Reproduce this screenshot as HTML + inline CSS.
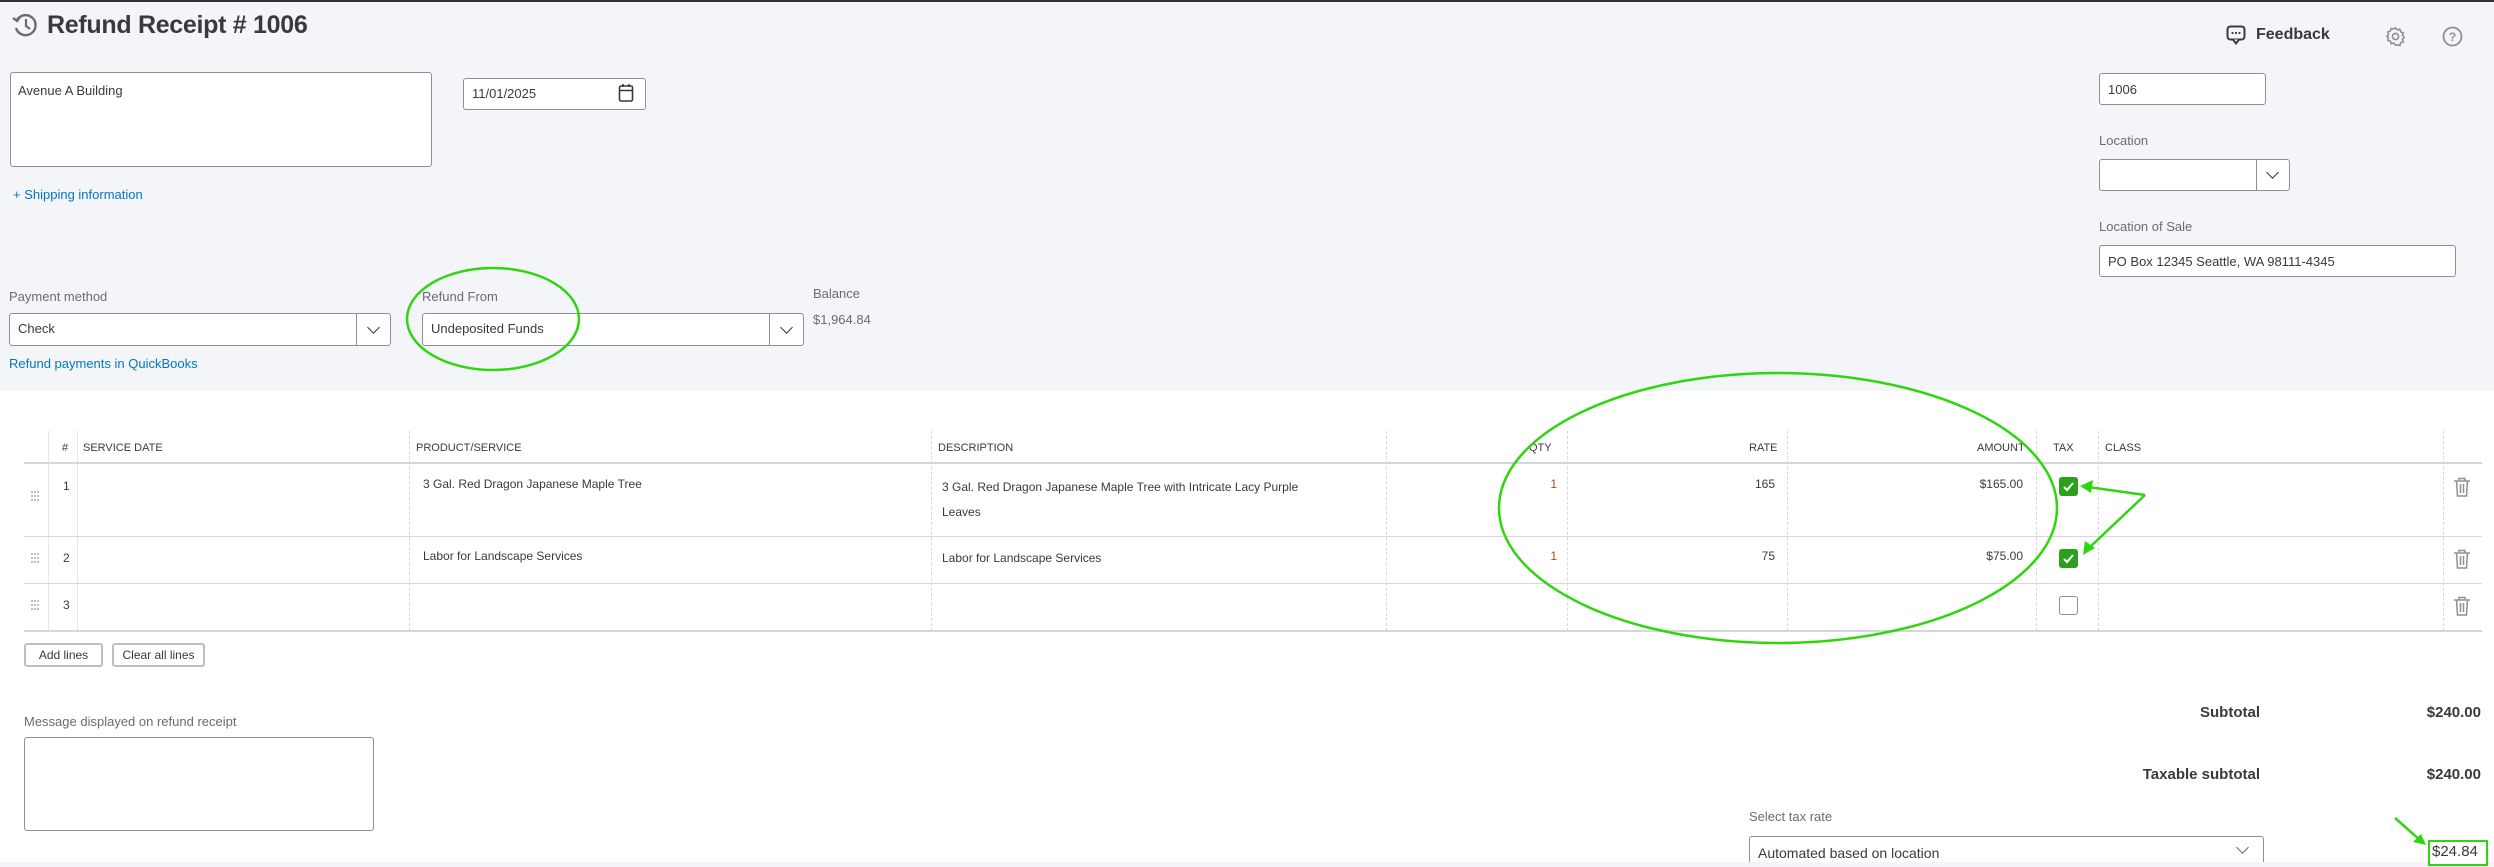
<!DOCTYPE html>
<html><head><meta charset="utf-8"><style>
*{box-sizing:border-box;margin:0;padding:0}
body{width:2494px;height:867px;overflow:hidden;background:#fff;font-family:"Liberation Sans",Arial,sans-serif;color:#393a3d;position:relative}
.a{position:absolute;white-space:nowrap}
.top{position:absolute;left:0;top:0;width:2494px;height:391px;background:#f4f5f8;border-top:2px solid #333}
.box{position:absolute;background:#fff;border:1px solid #8d9096;border-radius:3px}
.lbl{font-size:13px;color:#6b6c72}
.t13{font-size:13px;color:#393a3d}
.link{font-size:13px;color:#0077c5}
.div{position:absolute;top:0;bottom:0;border-left:1px solid #8d9096}
.chev{position:absolute;width:9px;height:9px;border-right:1.6px solid #393a3d;border-bottom:1.6px solid #393a3d;transform:rotate(45deg)}
.hd{font-size:11px;color:#393a3d;top:442px}
.vl{position:absolute;border-left:1px dashed #d4d7dc}
.hl{position:absolute;left:24px;width:2458px;border-top:2px solid #d4d7dc}
.cb{position:absolute;width:19px;height:19px;border-radius:3px;background:#2ca01c}
.btn{position:absolute;border:2px solid #babec5;border-radius:3px;font-size:12px;color:#393a3d;text-align:center;line-height:20px;background:#fff}
</style></head><body>
<div class="top"></div>
<svg class="a" style="left:11px;top:11px" width="28" height="28" viewBox="0 0 28 28"><path d="M6 9A10 10 0 1 1 5 17" fill="none" stroke="#6b6c72" stroke-width="2.4"/><path d="M2 7l4 3 3-4" fill="none" stroke="#6b6c72" stroke-width="2.4"/><path d="M15 8v7l4 3" fill="none" stroke="#6b6c72" stroke-width="2.2"/></svg>
<div class="a" style="left:47px;top:11px;font-size:25px;font-weight:bold;color:#393a3d;letter-spacing:-0.3px">Refund Receipt # 1006</div>

<svg class="a" style="left:2226px;top:25px" width="20" height="21" viewBox="0 0 20 21"><rect x="1.5" y="1.5" width="17" height="13" rx="3" fill="none" stroke="#393a3d" stroke-width="2"/><path d="M7 14.5l3 4 3-4" fill="#fff" stroke="#393a3d" stroke-width="2"/><circle cx="6.5" cy="8" r="1.1" fill="#393a3d"/><circle cx="10" cy="8" r="1.1" fill="#393a3d"/><circle cx="13.5" cy="8" r="1.1" fill="#393a3d"/></svg>
<div class="a" style="left:2256px;top:26px;font-size:16px;font-weight:bold;color:#393a3d">Feedback</div>
<svg class="a" style="left:2385px;top:26px" width="21" height="21" viewBox="0 0 24 24"><path d="M12 2l2 2.5 3-.8.8 3 3 1-.8 3 2 2.3-2 2.3.8 3-3 1-.8 3-3-.8L12 22l-2-2.5-3 .8-.8-3-3-1 .8-3L2 12l2-2.3-.8-3 3-1 .8-3 3 .8z" fill="none" stroke="#8d9096" stroke-width="1.8"/><circle cx="12" cy="12" r="3.5" fill="none" stroke="#8d9096" stroke-width="1.8"/></svg>
<svg class="a" style="left:2442px;top:26px" width="21" height="21" viewBox="0 0 21 21"><circle cx="10.5" cy="10.5" r="9" fill="none" stroke="#8d9096" stroke-width="1.8"/><text x="10.5" y="15" font-size="12" font-weight="bold" text-anchor="middle" fill="#8d9096" font-family="Liberation Sans">?</text></svg>

<div class="box" style="left:10px;top:72px;width:422px;height:95px"></div>
<div class="a t13" style="left:18px;top:83px">Avenue A Building</div>
<div class="box" style="left:463px;top:78px;width:183px;height:32px"></div>
<div class="a t13" style="left:472px;top:86px">11/01/2025</div>
<svg class="a" style="left:618px;top:83px" width="16" height="20" viewBox="0 0 16 20"><rect x="1.5" y="3" width="13" height="15" rx="1.5" fill="none" stroke="#393a3d" stroke-width="1.6"/><path d="M1.5 7.5h13M5 1v3M11 1v3" stroke="#393a3d" stroke-width="1.6"/></svg>
<div class="a link" style="left:13px;top:187px">+ Shipping information</div>

<div class="a lbl" style="left:9px;top:289px">Payment method</div>
<div class="box" style="left:9px;top:313px;width:382px;height:33px"><div class="div" style="left:346px"></div><div class="chev" style="left:359px;top:9px"></div></div>
<div class="a t13" style="left:18px;top:321px">Check</div>
<div class="a link" style="left:9px;top:356px">Refund payments in QuickBooks</div>
<div class="a lbl" style="left:422px;top:289px">Refund From</div>
<div class="box" style="left:422px;top:313px;width:382px;height:33px"><div class="div" style="left:346px"></div><div class="chev" style="left:359px;top:9px"></div></div>
<div class="a t13" style="left:431px;top:321px">Undeposited Funds</div>
<div class="a lbl" style="left:813px;top:286px">Balance</div>
<div class="a lbl" style="left:813px;top:312px">$1,964.84</div>

<div class="box" style="left:2099px;top:73px;width:167px;height:32px"></div>
<div class="a t13" style="left:2108px;top:82px">1006</div>
<div class="a lbl" style="left:2099px;top:133px">Location</div>
<div class="box" style="left:2099px;top:159px;width:191px;height:32px"><div class="div" style="left:156px"></div><div class="chev" style="left:168px;top:8px"></div></div>
<div class="a lbl" style="left:2099px;top:219px">Location of Sale</div>
<div class="box" style="left:2099px;top:245px;width:357px;height:32px"></div>
<div class="a t13" style="left:2108px;top:254px">PO Box 12345 Seattle, WA 98111-4345</div>

<!-- table -->
<div class="vl" style="left:48px;top:431px;height:200px;border-left-style:solid;border-color:#e3e5e8"></div>
<div class="vl" style="left:77px;top:431px;height:200px;border-left-style:solid;border-color:#e3e5e8"></div>
<div class="vl" style="left:409px;top:431px;height:200px"></div>
<div class="vl" style="left:931px;top:431px;height:200px"></div>
<div class="vl" style="left:1386px;top:431px;height:200px"></div>
<div class="vl" style="left:1567px;top:431px;height:200px"></div>
<div class="vl" style="left:1787px;top:431px;height:200px"></div>
<div class="vl" style="left:2036px;top:431px;height:200px"></div>
<div class="vl" style="left:2098px;top:431px;height:200px"></div>
<div class="vl" style="left:2443px;top:431px;height:200px"></div>
<div class="a hd" style="left:62px">#</div>
<div class="a hd" style="left:83px">SERVICE DATE</div>
<div class="a hd" style="left:416px">PRODUCT/SERVICE</div>
<div class="a hd" style="left:938px">DESCRIPTION</div>
<div class="a hd" style="left:1529px">QTY</div>
<div class="a hd" style="left:1749px">RATE</div>
<div class="a hd" style="left:1977px">AMOUNT</div>
<div class="a hd" style="left:2053px">TAX</div>
<div class="a hd" style="left:2105px">CLASS</div>
<div class="hl" style="top:462px"></div>
<div class="hl" style="top:536px;border-top-width:1px"></div>
<div class="hl" style="top:583px;border-top-width:1px"></div>
<div class="hl" style="top:630px"></div>

<svg class="a" style="left:30px;top:490px" width="10" height="12"><g fill="#a8acb3"><circle cx="2" cy="2" r="1"/><circle cx="5" cy="2" r="1"/><circle cx="8" cy="2" r="1"/><circle cx="2" cy="6" r="1"/><circle cx="5" cy="6" r="1"/><circle cx="8" cy="6" r="1"/><circle cx="2" cy="10" r="1"/><circle cx="5" cy="10" r="1"/><circle cx="8" cy="10" r="1"/></g></svg>
<svg class="a" style="left:30px;top:552px" width="10" height="12"><g fill="#a8acb3"><circle cx="2" cy="2" r="1"/><circle cx="5" cy="2" r="1"/><circle cx="8" cy="2" r="1"/><circle cx="2" cy="6" r="1"/><circle cx="5" cy="6" r="1"/><circle cx="8" cy="6" r="1"/><circle cx="2" cy="10" r="1"/><circle cx="5" cy="10" r="1"/><circle cx="8" cy="10" r="1"/></g></svg>
<svg class="a" style="left:30px;top:599px" width="10" height="12"><g fill="#a8acb3"><circle cx="2" cy="2" r="1"/><circle cx="5" cy="2" r="1"/><circle cx="8" cy="2" r="1"/><circle cx="2" cy="6" r="1"/><circle cx="5" cy="6" r="1"/><circle cx="8" cy="6" r="1"/><circle cx="2" cy="10" r="1"/><circle cx="5" cy="10" r="1"/><circle cx="8" cy="10" r="1"/></g></svg>
<div class="a t13" style="left:63px;top:479px;font-size:12px">1</div>
<div class="a t13" style="left:63px;top:551px;font-size:12px">2</div>
<div class="a t13" style="left:63px;top:598px;font-size:12px">3</div>
<div class="a t13" style="left:423px;top:477px;font-size:12px">3 Gal. Red Dragon Japanese Maple Tree</div>
<div class="a t13" style="left:423px;top:549px;font-size:12px">Labor for Landscape Services</div>
<div class="a t13" style="left:942px;top:475px;font-size:12px;line-height:25px">3 Gal. Red Dragon Japanese Maple Tree with Intricate Lacy Purple<br>Leaves</div>
<div class="a t13" style="left:942px;top:551px;font-size:12px">Labor for Landscape Services</div>
<div class="a t13" style="right:937px;top:477px;font-size:12px;color:#8d5a2b">1</div>
<div class="a t13" style="right:937px;top:549px;font-size:12px;color:#8d5a2b">1</div>
<div class="a t13" style="right:719px;top:477px;font-size:12px">165</div>
<div class="a t13" style="right:719px;top:549px;font-size:12px">75</div>
<div class="a t13" style="right:471px;top:477px;font-size:12px">$165.00</div>
<div class="a t13" style="right:471px;top:549px;font-size:12px">$75.00</div>
<div class="cb" style="left:2059px;top:477px"></div>
<div class="cb" style="left:2059px;top:549px"></div>
<svg class="a" style="left:2059px;top:477px" width="19" height="19"><path d="M5 10l3 3 6-7" fill="none" stroke="#fff" stroke-width="2"/></svg>
<svg class="a" style="left:2059px;top:549px" width="19" height="19"><path d="M5 10l3 3 6-7" fill="none" stroke="#fff" stroke-width="2"/></svg>
<div class="a" style="left:2059px;top:596px;width:19px;height:19px;border:1.5px solid #8d9096;border-radius:3px"></div>
<svg class="a" style="left:2453px;top:477px" width="18" height="20" viewBox="0 0 18 20"><path d="M1 4h16M6 4V1.5h6V4M3.5 4l1 15h9l1-15M7.5 7v9M10.5 7v9" fill="none" stroke="#8d9096" stroke-width="1.5"/></svg>
<svg class="a" style="left:2453px;top:549px" width="18" height="20" viewBox="0 0 18 20"><path d="M1 4h16M6 4V1.5h6V4M3.5 4l1 15h9l1-15M7.5 7v9M10.5 7v9" fill="none" stroke="#8d9096" stroke-width="1.5"/></svg>
<svg class="a" style="left:2453px;top:596px" width="18" height="20" viewBox="0 0 18 20"><path d="M1 4h16M6 4V1.5h6V4M3.5 4l1 15h9l1-15M7.5 7v9M10.5 7v9" fill="none" stroke="#8d9096" stroke-width="1.5"/></svg>

<div class="btn" style="left:24px;top:643px;width:79px;height:24px">Add lines</div>
<div class="btn" style="left:112px;top:643px;width:93px;height:24px">Clear all lines</div>

<div class="a lbl" style="left:24px;top:714px">Message displayed on refund receipt</div>
<div class="box" style="left:24px;top:737px;width:350px;height:94px"></div>

<div class="a" style="right:234px;top:704px;font-size:15px;font-weight:bold;color:#393a3d">Subtotal</div>
<div class="a" style="right:13px;top:704px;font-size:15px;font-weight:bold;color:#393a3d">$240.00</div>
<div class="a" style="right:234px;top:766px;font-size:15px;font-weight:bold;color:#393a3d">Taxable subtotal</div>
<div class="a" style="right:13px;top:766px;font-size:15px;font-weight:bold;color:#393a3d">$240.00</div>
<div class="a lbl" style="left:1749px;top:809px">Select tax rate</div>
<div class="box" style="left:1749px;top:836px;width:515px;height:30px;border-bottom:none;border-radius:3px 3px 0 0"></div>
<div class="a t13" style="left:1758px;top:845px;font-size:14px">Automated based on location</div>
<div class="chev" style="left:2238px;top:843px;border-color:#6b6c72"></div>
<div class="a" style="left:0;top:862px;width:2494px;height:5px;background:#f4f5f8"></div>
<div class="a" style="left:2428px;top:840px;width:60px;height:26px;border:2px solid #2fd60f;background:#fff"></div>
<div class="a" style="left:2432px;top:843px;font-size:15px;color:#393a3d">$24.84</div>

<svg class="a" style="left:0;top:0" width="2494" height="867">
<ellipse cx="493" cy="319" rx="86" ry="51" fill="none" stroke="#2fd60f" stroke-width="2.5"/>
<ellipse cx="1778" cy="508" rx="279" ry="135" fill="none" stroke="#2fd60f" stroke-width="2.5"/>
<path d="M2145 495L2088 487M2145 495L2089 548" fill="none" stroke="#2fd60f" stroke-width="2.5"/>
<path d="M2080 486l13-6-2 13z M2083 555l2-14 10 7z" fill="#2fd60f"/>
<path d="M2395 818L2420 840" stroke="#2fd60f" stroke-width="2.5"/>
<path d="M2426 845l-13-3 8-8z" fill="#2fd60f"/>
</svg>
</body></html>
